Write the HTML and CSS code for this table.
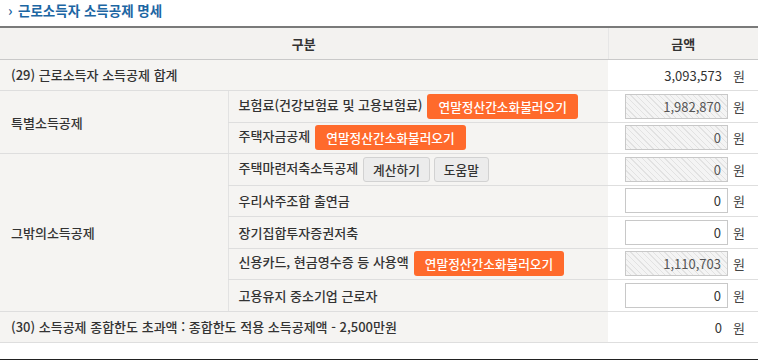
FILE: index.html
```html
<!DOCTYPE html>
<html lang="ko">
<head>
<meta charset="utf-8">
<link rel="stylesheet" href="styles.css">
</head>
<body>
<div class="page">
  <h2 class="title"><span class="arrow">›</span>근로소득자 소득공제 명세</h2>
  <table class="grid">
    <colgroup><col class="c1"><col class="c2"><col class="c3"></colgroup>
    <thead>
      <tr><th colspan="2">구분</th><th class="amt-h">금액</th></tr>
    </thead>
    <tbody>
      <tr><td colspan="2" class="lbl">(29) 근로소득자 소득공제 합계</td><td class="amt"><span class="plain">3,093,573</span><span class="won">원</span></td></tr>
      <tr><td rowspan="2" class="lbl grp">특별소득공제</td><td class="sub">보험료(건강보험료 및 고용보험료)<button class="obtn">연말정산간소화불러오기</button></td><td class="amt"><span class="inp ro">1,982,870</span><span class="won">원</span></td></tr>
      <tr><td class="sub">주택자금공제<button class="obtn">연말정산간소화불러오기</button></td><td class="amt"><span class="inp ro">0</span><span class="won">원</span></td></tr>
      <tr><td rowspan="5" class="lbl grp">그밖의소득공제</td><td class="sub">주택마련저축소득공제<button class="gbtn">계산하기</button><button class="gbtn">도움말</button></td><td class="amt"><span class="inp ro">0</span><span class="won">원</span></td></tr>
      <tr><td class="sub">우리사주조합 출연금</td><td class="amt"><span class="inp">0</span><span class="won">원</span></td></tr>
      <tr><td class="sub">장기집합투자증권저축</td><td class="amt"><span class="inp">0</span><span class="won">원</span></td></tr>
      <tr><td class="sub">신용카드, 현금영수증 등 사용액<button class="obtn">연말정산간소화불러오기</button></td><td class="amt"><span class="inp ro">1,110,703</span><span class="won">원</span></td></tr>
      <tr><td class="sub">고용유지 중소기업 근로자</td><td class="amt"><span class="inp">0</span><span class="won">원</span></td></tr>
      <tr><td colspan="2" class="lbl">(30) 소득공제 종합한도 초과액 : 종합한도 적용 소득공제액 - 2,500만원</td><td class="amt"><span class="plain">0</span><span class="won">원</span></td></tr>
    </tbody>
  </table>
  <div class="next"></div>
</div>
</body>
</html>
```
FILE: styles.css
```css
* { box-sizing: border-box; }
html, body { margin: 0; padding: 0; background: #fff; }
body {
  font-family: "Noto Sans CJK KR", "Noto Sans", sans-serif;
  font-size: 13px;
  color: #333;
}
.page { width: 773px; }
.title {
  margin: 0;
  height: 26px;
  padding: 2px 0 0 8px;
  font-size: 13.5px;
  font-weight: 700;
  color: #1c66a3;
  line-height: 16px;
}
.arrow { display: inline-block; width: 10px; font-size: 14px; color: #1c66a3; }
.grid {
  width: 758px;
  border-collapse: collapse;
  table-layout: fixed;
  border-top: 2px solid #7a7a7a;
}
.c1 { width: 228px; }
.c2 { width: 380px; }
.c3 { width: 150px; }
.grid th {
  height: 32px;
  background: #f3f2f0;
  font-weight: 700;
  color: #333;
  border-bottom: 1px solid #c9c9c9;
  padding: 0;
}
.grid th.amt-h { border-left: 1px solid #e6e6e6; }
.grid td {
  height: 31.5px;
  padding: 0;
  border-bottom: 1px solid #dedede;
  background: #f5f4f2;
  vertical-align: middle;
  white-space: nowrap;
  font-weight: 500;
}
.grid td.lbl { padding-left: 11px; }
.grid td.sub { padding-left: 10px; border-left: 1px solid #e2e2e2; }
.grid td.amt {
  background: #fff;
  text-align: right;
  padding-right: 13px;
  font-weight: 400;
}
.inp {
  display: inline-block;
  width: 103px;
  height: 25px;
  line-height: 23px;
  border: 1px solid #c8c8c8;
  background: #fff;
  text-align: right;
  padding-right: 6px;
  vertical-align: middle;
  color: #333;
}
.inp.ro {
  background: #f2f2f2 repeating-linear-gradient(45deg, #f4f4f4 0 3px, #e2e2e2 3px 4px);
  color: #555;
}
.plain { display: inline-block; vertical-align: middle; padding-right: 6px; }
.won { display: inline-block; width: 17px; text-align: right; vertical-align: middle; color: #444; }
.obtn {
  font: inherit;
  font-size: 12.7px;
  margin-left: 5px;
  height: 25px;
  padding: 0 11px;
  border: 0;
  border-radius: 3px;
  background: #ff6a2c;
  color: #fff;
  font-weight: 500;
  vertical-align: middle;
}
.gbtn {
  font: inherit;
  font-size: 12.7px;
  margin-left: 5px;
  height: 25px;
  padding: 0 9px;
  border: 1px solid #d2d2d2;
  border-radius: 3px;
  background: #ececec;
  color: #333;
  vertical-align: middle;
}
.gbtn + .gbtn { margin-left: 4px; }
.next { margin-top: 16px; border-top: 2px solid #222; width: 758px; }
```
